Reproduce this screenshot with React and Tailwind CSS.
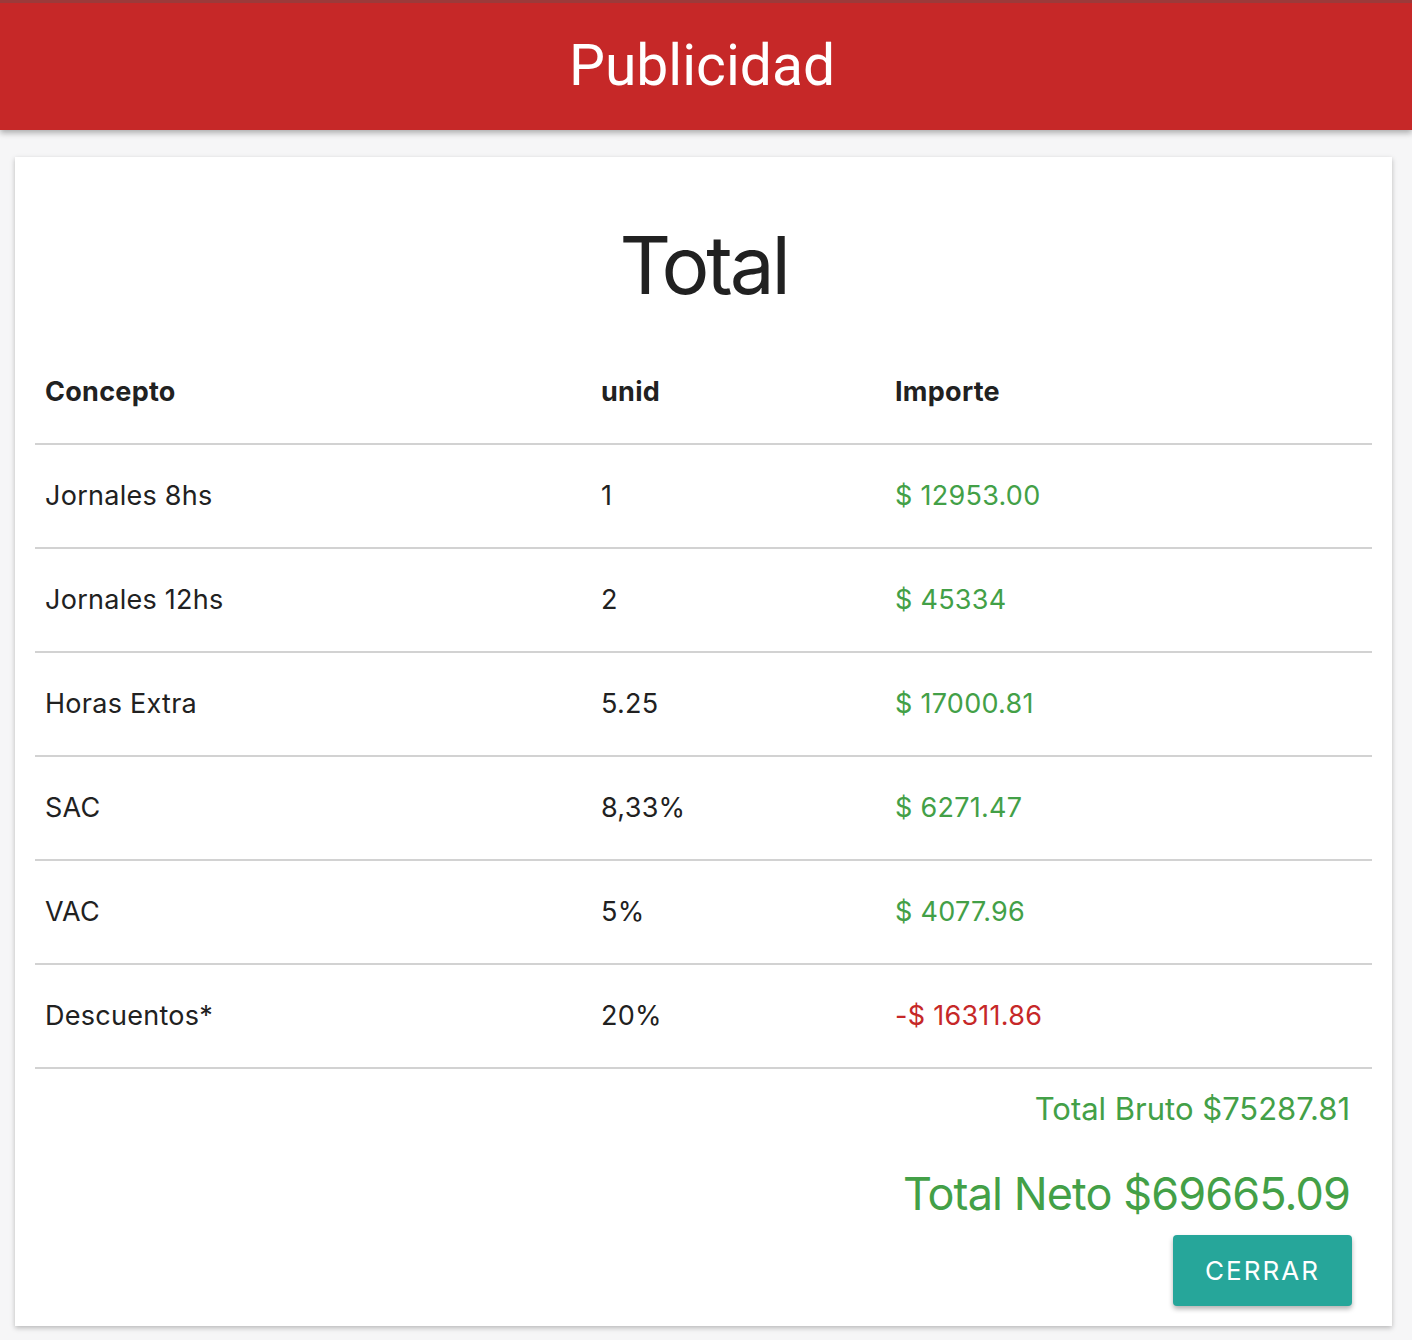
const rows = [
  { concepto: "Jornales 8hs", unid: "1", importe: "$ 12953.00" },
  { concepto: "Jornales 12hs", unid: "2", importe: "$ 45334" },
  { concepto: "Horas Extra", unid: "5.25", importe: "$ 17000.81" },
  { concepto: "SAC", unid: "8,33%", importe: "$ 6271.47" },
  { concepto: "VAC", unid: "5%", importe: "$ 4077.96" },
  { concepto: "Descuentos*", unid: "20%", importe: "-$ 16311.86", negative: true },
];

const App = () => {
  return (
    <div className="min-h-screen bg-[#f6f6f7] font-['Inter','Roboto',sans-serif] text-[#212121]">
      {/* HEADER */}
      <header className="h-[130px] border-t-[3px] border-[#9c3a3a] bg-[#c62828] shadow-[0_3px_6px_rgba(0,0,0,0.3)] flex items-center justify-center">
        <h1 className="text-white text-[57px] font-normal font-['Roboto',sans-serif] leading-none -mt-[3px] -ml-[8px]">
          Publicidad
        </h1>
      </header>

      {/* CARD */}
      <div className="ml-[15px] mr-[20px] mt-[27px] bg-white shadow-[0_2px_5px_rgba(0,0,0,0.25)] px-[20px] pt-[68px] pb-[20px]">
        <h2 className="text-center text-[80px] leading-[80px] font-normal tracking-[-0.04em] text-[#212121]">Total</h2>

        <div className="mt-[36px]">
          <div className="grid grid-cols-[556px_294px_1fr] h-[104px] items-center border-b-2 border-[#d2d2d2] text-[27px] tracking-[0.01em] font-bold">
            <div className="pl-[10px]">Concepto</div>
            <div className="pl-[10px]">unid</div>
            <div className="pl-[10px]">Importe</div>
          </div>
          {rows.map((r) => (
            <div
              key={r.concepto}
              className="grid grid-cols-[556px_294px_1fr] h-[104px] items-center border-b-2 border-[#d2d2d2] text-[27px] tracking-[0.01em]"
            >
              <div className="pl-[10px]">{r.concepto}</div>
              <div className="pl-[10px]">{r.unid}</div>
              <div className={`pl-[10px] ${r.negative ? "text-[#c62828]" : "text-[#43a047]"}`}>{r.importe}</div>
            </div>
          ))}
        </div>

        {/* TOTALS */}
        <div className="flex flex-col items-end pr-[22px] text-[#43a047]">
          <p className="mt-[20px] text-[31px] leading-[40px]">Total Bruto $75287.81</p>
          <p className="mt-[40px] text-[45px] leading-[50px] tracking-[-0.02em]">Total Neto $69665.09</p>
        </div>
        <div className="flex justify-end mt-[16px] pr-[20px]">
          <button className="w-[179px] h-[71px] bg-[#26a69a] text-white text-[26px] tracking-[0.08em] rounded-[4px] shadow-[0_3px_5px_rgba(0,0,0,0.3)]">
            CERRAR
          </button>
        </div>
      </div>
    </div>
  );
};

export default App;
